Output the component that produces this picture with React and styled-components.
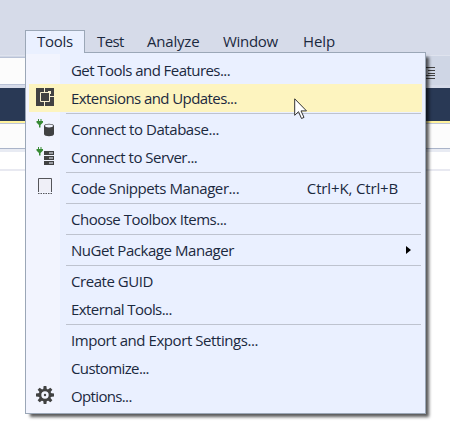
import React from "react";
import styled, { createGlobalStyle } from "styled-components";

const GlobalStyle = createGlobalStyle`
  * { box-sizing: border-box; }
  body { margin: 0; overflow: hidden; background: #fff; }
`;

const Window = styled.div`
  position: relative;
  width: 450px;
  height: 438px;
  overflow: hidden;
  background: #fff;
  color: #1b293e;
  font: 15px/20px "Open Sans", "Noto Sans", sans-serif;
`;

const TitleArea = styled.div`
  height: 30px;
  background: #d6dbe9;
`;

const MenuBar = styled.nav`
  display: flex;
  height: 25px;
  padding-left: 25px;
  background: #d6dbe9;
`;

const MenuTab = styled.div`
  width: ${(p) => p.$width}px;
  height: 23px;
  padding: ${(p) => (p.$active ? "0 0 0 11px" : "1px 0 0 12px")};
  border: solid #9ba7b7;
  border-width: ${(p) => (p.$active ? "1px 1px 0" : "0")};
  background: ${(p) => (p.$active ? "#eaf0ff" : "transparent")};
  letter-spacing: ${(p) => p.$spacing}px;
  white-space: nowrap;
`;

const Toolbar = styled.div`
  display: flex;
  justify-content: space-between;
  height: 33px;
  border-top: 1px solid #dfe3ee;
  background: #cfd6e5;
  border-bottom: 3px solid #d6dbe9;
`;

const ToolbarInput = styled.div`
  width: 120px;
  height: 28px;
  margin-top: 1px;
  background: #fcfcfc;
  border: solid #b9c2d6;
  border-width: 1px 0;
`;

const ToolbarEnd = styled.div`
  padding: 8px 15px 0 0;
`;

const DocumentWell = styled.div`
  height: 33px;
  background: #293955;
`;

const TabLine = styled.div`
  height: 3px;
  background: #fff29d;
  border-bottom: 1px solid #bdc5d8;
`;

const NavigationBar = styled.div`
  height: 28px;
  background: #fcfcfc;
  border-bottom: 3px solid #e8ebf3;
  box-shadow: inset 0 -1px #aab4c9;
`;

const EditorRule = styled.div`
  height: 19px;
  border-bottom: 2px solid #e8e9f1;
`;

const Dropdown = styled.div`
  position: absolute;
  left: 25px;
  top: 52px;
  width: 401px;
  height: 362px;
  padding: 3px 3px 3px 3px;
  border: 1px solid #9ba7b7;
  background: linear-gradient(90deg, #f2f4fe 34px, #eaf0ff 34px);
  box-shadow: 4px 4px 3px -1px rgba(0, 0, 0, 0.65);
`;

const TabJoin = styled.div`
  position: absolute;
  left: 0;
  top: -1px;
  width: 58px;
  height: 2px;
  background: #eaf0ff;
`;

const MenuRow = styled.div`
  display: grid;
  grid-template-columns: 42px 1fr auto;
  align-items: center;
  height: 28px;
  background: ${(p) => (p.$hot ? "#fdf4bf" : "transparent")};
`;

const IconCell = styled.span`
  display: flex;
  height: 28px;
  padding: 4px 0 0 6px;
`;

const Label = styled.span`
  letter-spacing: ${(p) => p.$spacing}px;
  white-space: nowrap;
`;

const Shortcut = styled(Label)`
  padding-right: 24px;
`;

const SubmenuArrow = styled.span`
  margin-right: 11px;
  border: solid transparent;
  border-width: 4.5px 0 4.5px 5px;
  border-left-color: #000;
`;

const Separator = styled.div`
  height: 1px;
  margin: 1px 1px 1px 37px;
  background: #bec3cf;
`;

const Cursor = styled.svg`
  position: absolute;
  left: 294px;
  top: 98px;
`;

const Svg = (props) => <svg width="20" height="20" viewBox="0 0 20 20" {...props} />;

const ExtensionsIcon = () => (
  <Svg>
    <path fill="#424242" d="M1 0h18v18H1z" />
    <path fill="none" stroke="#f8f0d0" d="M5.5 4.5h9v9h-9zM9.5 0v4M15 8.5h4M9.5 14v4" />
    <path fill="#f8f0d0" d="M13 3h3v3h-2V5h-1z" />
  </Svg>
);

const Plug = () => (
  <path fill="#388a34" d="M2 0h1v2h1.5V0h1v2H7v1.5L4.5 6v2.5H3V6L.5 3.5V2H2z" />
);

const DatabaseIcon = () => (
  <Svg>
    <g transform="translate(1)"><Plug /></g>
    <path fill="#424242" d="M9 7c0-3 10-3 10 0v8c0 3-10 3-10 0z" />
    <ellipse cx="14" cy="7" rx="4" ry="1.4" fill="#f2f4fe" />
  </Svg>
);

const ServerIcon = () => (
  <Svg>
    <g transform="translate(1)"><Plug /></g>
    <path fill="#424242" d="M9 4h10v4H9zM9 9h10v4H9zM9 14h10v4H9z" />
    <path fill="#f2f4fe" d="M14 5.5h4v1h-4zM14 10.5h4v1h-4zM14 15.5h4v1h-4z" />
  </Svg>
);

const SnippetIcon = () => (
  <Svg>
    <path fill="#efeff7" stroke="#55555a" d="M3.5 14V.5h13V14" />
    <path fill="none" stroke="#55555a" strokeDasharray="1.5 1" d="M3 15.5h14" />
  </Svg>
);

const TEETH = [0, 45, 90, 135, 180, 225, 270, 315];

const GearIcon = () => (
  <Svg>
    <g transform="translate(0 -1)">
      <g fill="#424242">
        {TEETH.map((a) => (
          <path key={a} d="M8.6 1h2.8l.5 4H8.1z" transform={`rotate(${a} 10 10)`} />
        ))}
      </g>
      <circle cx="10" cy="10" r="5" fill="none" stroke="#424242" strokeWidth="2.6" />
      <circle cx="10" cy="10" r="1.2" fill="#424242" />
    </g>
  </Svg>
);

const TABS = [
  { text: "Tools", width: 60, active: true, spacing: -0.25 },
  { text: "Test", width: 50, spacing: -0.6 },
  { text: "Analyze", width: 76, spacing: -0.2 },
  { text: "Window", width: 80, spacing: -0.3 },
  { text: "Help", width: 60, spacing: -0.1 },
];

const GROUPS = [
  [
    { text: "Get Tools and Features...", spacing: -0.55 },
    { text: "Extensions and Updates...", spacing: -0.58, icon: ExtensionsIcon, hot: true },
  ],
  [
    { text: "Connect to Database...", spacing: -0.45, icon: DatabaseIcon },
    { text: "Connect to Server...", spacing: -0.52, icon: ServerIcon },
  ],
  [{ text: "Code Snippets Manager...", spacing: -0.42, icon: SnippetIcon, shortcut: "Ctrl+K, Ctrl+B" }],
  [{ text: "Choose Toolbox Items...", spacing: -0.5 }],
  [{ text: "NuGet Package Manager", spacing: -0.45, submenu: true }],
  [
    { text: "Create GUID", spacing: -0.45 },
    { text: "External Tools...", spacing: -0.56 },
  ],
  [
    { text: "Import and Export Settings...", spacing: -0.43 },
    { text: "Customize...", spacing: -0.6 },
    { text: "Options...", spacing: -0.65, icon: GearIcon },
  ],
];

export default function App() {
  return (
    <Window>
      <GlobalStyle />
      <TitleArea />
      <MenuBar>
        {TABS.map((t) => (
          <MenuTab key={t.text} $width={t.width} $active={t.active} $spacing={t.spacing}>
            {t.text}
          </MenuTab>
        ))}
      </MenuBar>
      <Toolbar>
        <ToolbarInput />
        <ToolbarEnd>
          <svg width="10" height="14" viewBox="0 0 10 14">
            <path fill="none" stroke="#424242" d="M0 1.5h10M3 4.5h7M3 7.5h7M0 9.5h10M0 12.5h10" />
          </svg>
        </ToolbarEnd>
      </Toolbar>
      <DocumentWell />
      <TabLine />
      <NavigationBar />
      <EditorRule />
      <Dropdown>
        <TabJoin />
        {GROUPS.map((group, i) => (
          <React.Fragment key={group[0].text}>
            {i > 0 && <Separator />}
            {group.map(({ text, spacing, icon: Icon, hot, shortcut, submenu }) => (
              <MenuRow key={text} $hot={hot}>
                <IconCell>{Icon && <Icon />}</IconCell>
                <Label $spacing={spacing}>{text}</Label>
                {shortcut && <Shortcut $spacing={-0.15}>{shortcut}</Shortcut>}
                {submenu && <SubmenuArrow />}
              </MenuRow>
            ))}
          </React.Fragment>
        ))}
      </Dropdown>
      <Cursor width="16" height="24" viewBox="0 0 16 24">
        <path fill="#fff" stroke="#333" strokeLinejoin="round" d="M.7.8v16.5l3.8-3.6 3 6.8 2.5-1.1-3-6.5h5.5z" />
      </Cursor>
    </Window>
  );
}
